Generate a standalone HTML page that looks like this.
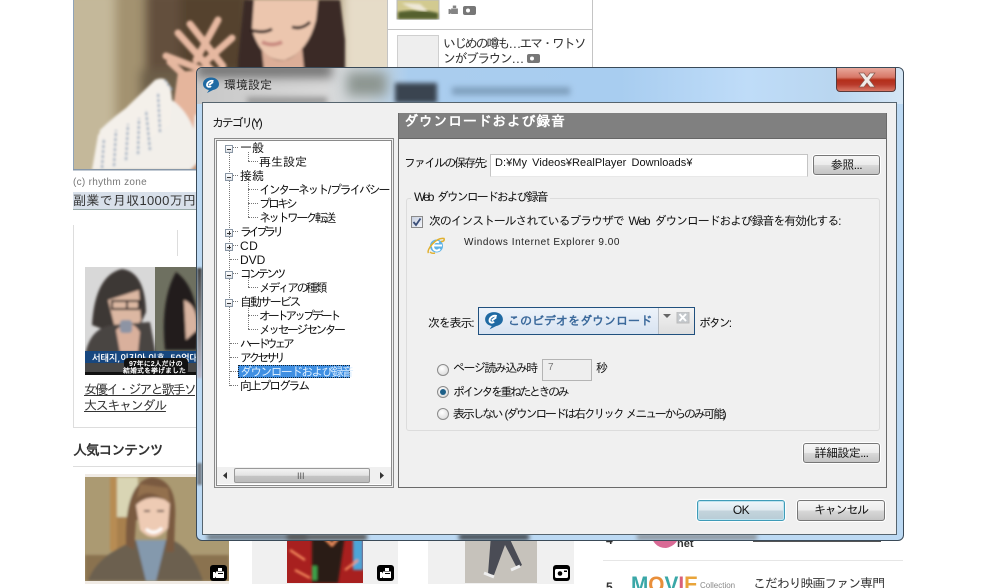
<!DOCTYPE html>
<html lang="ja"><head><meta charset="utf-8"><title>環境設定</title>
<style>
html,body{margin:0;padding:0;background:#fff}
#p{position:relative;width:1001px;height:588px;overflow:hidden;background:#fff;font-family:"Liberation Sans","IPAGothic","Noto Sans CJK JP",sans-serif;color:#222}
#p div,#p span.t{position:absolute}
.t{white-space:pre;line-height:14px;font-size:12px;letter-spacing:-1.4px;margin-top:1px}
.r{font-size:12px;color:#111}
.btn{box-sizing:border-box;border:1px solid #777;border-radius:3px;background:linear-gradient(#f6f6f6 0,#ececec 48%,#d8d8d8 52%,#c4c4c4 100%);box-shadow:0 0 0 1px #fff;text-align:center;font-size:12px;line-height:18px;color:#111;letter-spacing:-.6px}
.exp{width:8px;height:8px;border:1px solid #8a97a5;background:linear-gradient(#fff,#dfe3e8);box-sizing:border-box}
.exp:before{content:"";position:absolute;left:1px;right:1px;top:2.5px;height:1px;background:#333}
.pl:after{content:"";position:absolute;top:1px;bottom:1px;left:2.5px;width:1px;background:#333}
.dv{border-left:1px dotted #777;width:0}
.dh{border-top:1px dotted #777;height:0}
.rad{width:12px;height:12px;border-radius:50%;border:1px solid #8b8b8b;box-sizing:border-box;background:radial-gradient(circle at 40% 35%,#fff,#d4d4d4)}
</style></head><body><div id="p">

<svg style="position:absolute;left:0;top:0" width="1001" height="588" viewBox="0 0 1001 588">
<defs>
<filter id="b1"><feGaussianBlur stdDeviation="1.3"/></filter>
<filter id="b4"><feGaussianBlur stdDeviation="5"/></filter>
<clipPath id="c1"><rect x="73" y="0" width="314" height="170"/></clipPath>
<clipPath id="c2"><rect x="85" y="267" width="112" height="108"/></clipPath>
<clipPath id="c3"><rect x="85" y="477" width="144" height="104"/></clipPath>
<clipPath id="c4"><rect x="287" y="535" width="76" height="48"/></clipPath>
<clipPath id="c5"><rect x="465" y="535" width="72" height="48"/></clipPath>
<g id="vid"><path d="M3 7H5L6 8.500V6.500H14V13H6V11.500L5 13H3Z" fill="#fff"/><rect x="8" y="3" width="4" height="3" fill="#fff"/><rect x="8" y="8" width="5" height="1" fill="#000"/></g>
</defs>

<g clip-path="url(#c1)">
<rect x="73" y="0" width="314" height="170" fill="#a89878"/>
<g filter="url(#b4)">
<rect x="60" y="-10" width="55" height="190" fill="#c4b89a"/>
<rect x="115" y="-10" width="30" height="190" fill="#a39270"/>
<rect x="145" y="-10" width="35" height="100" fill="#64503e"/>
<rect x="140" y="70" width="50" height="40" fill="#6d5f48"/>
<rect x="180" y="-10" width="70" height="85" fill="#54432f"/>
<rect x="342" y="-10" width="60" height="190" fill="#e6dcc8"/>
</g>
<g filter="url(#b1)">
<path d="M244 0 L238 60 L236 110 L250 130 L345 120 L345 40 L340 0Z" fill="#3b2b27"/>
<path d="M254 0 L252 30 Q262 62 285 60 Q308 52 316 20 L318 0Z" fill="#ecc6ae"/>
<path d="M262 50 Q282 72 302 48 L306 90 L266 90Z" fill="#dcae98"/>
<path d="M250 30 Q264 34 272 29 M292 27 Q302 30 310 22" stroke="#2a1d1a" stroke-width="3" fill="none"/>
<path d="M262 42 Q272 47 282 42" stroke="#c98a80" stroke-width="4" fill="none"/>
<g stroke="#e6b8a0" stroke-width="7" stroke-linecap="round" fill="none">
<path d="M190 24 L223 66"/><path d="M178 33 L213 72"/><path d="M218 20 L196 60"/>
<path d="M166 56 L208 72"/><path d="M232 38 L205 62"/><path d="M170 62 L200 90"/>
</g>
<path d="M178 72 L220 68 L235 90 L215 140 L170 130Z" fill="#e5b59c"/>
<path d="M92 170 L100 130 Q130 100 170 85 L172 100 Q200 120 200 170Z" fill="#f2efea"/>
<path d="M155 80 Q172 72 172 105 L170 125 L110 165 L92 170 L98 135Z" fill="#f4f0ea"/>
<path d="M195 115 L250 100 L290 170 L190 170Z" fill="#f2eee8"/>
<path d="M205 155 Q240 135 270 150 L280 170 L190 170Z" fill="#c99c80"/>
<g stroke="#8da3bb" stroke-width="2.200" fill="none" stroke-dasharray="3 2">
<path d="M102 168 L104 138"/><path d="M114 166 L116 130"/><path d="M126 160 L128 124"/><path d="M138 154 L139 118"/><path d="M150 150 L146 110"/><path d="M160 132 L158 92"/><path d="M172 90 L165 80"/>
</g>
</g>
</g>
<rect x="73" y="0" width="1" height="170" fill="#8fa3b8"/>
<rect x="73" y="169" width="314" height="1.500" fill="#8797a8"/>

<rect x="397" y="0" width="42" height="19" fill="#d2ca90" stroke="#bbb"/>
<path d="M398 12 Q420 8 438 13 L438 19 L398 19Z" fill="#55602e" filter="url(#b1)"/>
<path d="M402 3 Q415 12 428 11 L420 4Z" fill="#eee8d8" filter="url(#b1)"/>
<rect x="397.500" y="35.500" width="41" height="33" fill="#eeeeee" stroke="#cfcfcf"/>

<g clip-path="url(#c2)">
<rect x="85" y="267" width="70" height="108" fill="#d8d8d8"/>
<rect x="155" y="267" width="45" height="108" fill="#6e7060"/>
<g filter="url(#b1)">
<path d="M176 272 Q202 290 197 350 L165 350Q160 300 176 272Z" fill="#241d1a"/>
<path d="M184 300 Q198 305 197 330 L186 340Z" fill="#d8b4a0"/>
<path d="M92 325 Q95 275 122 269 Q145 272 146 312 L138 330 L105 330Z" fill="#3e3734"/>
<path d="M108 300 L139 290 L141 320 Q130 342 116 332Z" fill="#dcb7a2"/>
<path d="M85 355 Q90 328 112 325 L150 322 L156 355Z" fill="#494442"/>
<path d="M116 330 Q130 316 140 332 L138 352 L120 352Z" fill="#d9b09c"/>
<rect x="120" y="320" width="12" height="13" fill="#8d94a4" rx="3"/>
<rect x="112" y="301" width="15" height="8" fill="none" stroke="#1d1d1d" stroke-width="2"/>
<rect x="127" y="301" width="12" height="8" fill="none" stroke="#1d1d1d" stroke-width="2"/>
</g>
<rect x="85" y="351" width="112" height="12" fill="#17477f"/>
<rect x="85" y="363" width="112" height="12" fill="#474747"/>
<rect x="85" y="372" width="112" height="3" fill="#111"/>
<text x="92" y="361" font-family="NanumGothic,sans-serif" font-size="9" font-weight="bold" fill="#fff">서태지,이지아 이혼, 50억대 소송</text>
<rect x="124" y="358" width="64" height="16" fill="#111" rx="4"/>
<text x="129" y="366" font-family="Liberation Sans,IPAGothic,sans-serif" font-size="7" font-weight="bold" fill="#fff">97年に2人だけの</text>
<text x="123" y="373" font-family="Liberation Sans,IPAGothic,sans-serif" font-size="7" font-weight="bold" fill="#fff">結婚式を挙げました</text>
</g>

<rect x="85" y="474" width="144" height="110" fill="#f0ebe5"/>
<g clip-path="url(#c3)">
<rect x="85" y="477" width="144" height="104" fill="#ab9a72"/>
<g filter="url(#b1)">
<rect x="85" y="555" width="144" height="26" fill="#8a7250"/>
<rect x="116" y="477" width="22" height="42" fill="#d9d5b4"/>
<rect x="110" y="477" width="7" height="74" fill="#b78c52"/>
<rect x="117" y="517" width="14" height="34" fill="#a8804e"/>
<path d="M88 581 Q96 556 136 540 L172 540 Q192 548 203 581Z" fill="#6c6050"/>
<path d="M136 540 L166 540 L156 581 L146 581Z" fill="#8499ad"/>
<path d="M126 545 Q124 482 152 477 Q178 480 175 520 L174 552 L166 552 L168 520 L136 520 L134 550Z" fill="#7a5a40"/>
<path d="M136 505 Q150 492 170 502 L168 528 Q154 545 140 530Z" fill="#eecbb4"/>
<path d="M137 498 Q150 486 170 504 L168 488 L140 484Z" fill="#93704e"/>
<path d="M146 529 Q154 536 162 528" stroke="#fff" stroke-width="3" fill="none"/>
<path d="M144 511H150M157 511H164" stroke="#322" stroke-width="1.500"/>
</g></g>

<rect x="252" y="540" width="146" height="44" fill="#f0f0f0"/>
<g clip-path="url(#c4)"><rect x="287" y="535" width="76" height="48" fill="#a8201f"/>
<g filter="url(#b1)"><path d="M312 535 L345 535 L338 583 L312 583Z" fill="#2c1a14"/><path d="M353 538 L363 538 L363 570 L353 570Z" fill="#4ea5d8"/>
<path d="M290 550 L305 560 M295 570 L310 578 M345 570 L358 560 M325 538 L332 545 L338 538" stroke="#ff9a66" stroke-width="2" fill="none"/><rect x="312" y="566" width="5" height="14" fill="#3ca04a"/></g></g>
<rect x="428" y="540" width="146" height="44" fill="#f0f0f0"/>
<g clip-path="url(#c5)"><rect x="465" y="535" width="72" height="48" fill="#c6c2bb"/>
<path d="M491 535 L488 574 L494 575 L505 545 L517 568 L522 565 L508 535Z" fill="#4a4c55"/>
<path d="M484 573 L494 577 M511 570 L520 566" stroke="#eee" stroke-width="3"/></g>

<g transform="translate(210,565)"><rect width="17" height="16" rx="3" fill="#000"/><use href="#vid"/></g>
<g transform="translate(377,565)"><rect width="17" height="16" rx="3" fill="#000"/><use href="#vid"/></g>
<g transform="translate(553,565)"><rect width="17" height="16" rx="3" fill="#000"/><rect x="2" y="4" width="13" height="9" rx="1.500" fill="#fff"/><circle cx="7" cy="8.500" r="2.300" fill="#000"/><rect x="11" y="5.500" width="3" height="1.500" fill="#000"/></g>
<g transform="translate(446,3)" opacity=".6"><g transform="scale(.85)"><rect width="17" height="16" rx="3" fill="#fff"/><path d="M3 7H5L6 8.500V6.500H14V13H6V11.500L5 13H3Z" fill="#333"/><rect x="8" y="3" width="4" height="3" fill="#333"/></g></g>
<g fill="#777"><rect x="463" y="6" width="13" height="9" rx="2"/><rect x="527" y="54" width="13" height="9" rx="2"/></g>
<g fill="#fff"><circle cx="468" cy="10.500" r="2"/><circle cx="532" cy="58.500" r="2"/></g>

<path d="M650 530 Q652 548 666 548 Q678 546 682 530Z" fill="#d96a95"/>
<text x="677" y="547" font-family="Liberation Sans" font-size="11" font-weight="bold" fill="#333">net</text>
<text x="631" y="592" font-family="Liberation Sans" font-size="22" font-weight="bold" textLength="67" lengthAdjust="spacingAndGlyphs"><tspan fill="#3aa7a7">M</tspan><tspan fill="#e98f3a">O</tspan><tspan fill="#3aa7a7">V</tspan><tspan fill="#d9607a">I</tspan><tspan fill="#e9a43a">E</tspan></text>
<text x="700" y="588" font-family="Liberation Sans" font-size="8" fill="#888">Collection</text>
</svg>

<span class="t" style="left:73px;top:175px;font-size:10px;color:#777;letter-spacing:.3px">(c) rhythm zone</span>
<div style="left:73px;top:192px;width:130px;height:17px;background:#d8e0ea;border-bottom:1px solid #9aa"></div>
<span class="t" style="left:73px;top:193px;font-size:13px;letter-spacing:.3px;color:#333">副業で月収1000万円</span>
<div style="left:73px;top:225px;width:1px;height:203px;background:#ddd"></div>
<div style="left:73px;top:427px;width:130px;height:1px;background:#ddd"></div>
<div style="left:177px;top:230px;width:1px;height:26px;background:#ddd"></div>
<span class="t" style="left:84px;top:382px;font-size:13px;letter-spacing:-1.9px;text-decoration:underline;color:#333">女優イ・ジアと歌手ソ</span>
<span class="t" style="left:84px;top:398px;font-size:13px;letter-spacing:-1.3px;text-decoration:underline;color:#333">大スキャンダル</span>
<span class="t" style="left:73px;top:442px;font-size:14px;font-weight:bold;letter-spacing:-1.2px;color:#333">人気コンテンツ</span>
<div style="left:73px;top:466px;width:130px;height:1px;background:#ddd"></div>

<div style="left:387px;top:0;width:1px;height:68px;background:#c4c4c4"></div>
<div style="left:592px;top:0;width:1px;height:68px;background:#c4c4c4"></div>
<div style="left:387px;top:29px;width:206px;height:1px;background:#c4c4c4"></div>
<span class="t" style="left:443px;top:36px;font-size:13px;letter-spacing:-2.1px;color:#333">いじめの噂も…エマ・ワトソ</span>
<span class="t" style="left:443px;top:51px;font-size:13px;letter-spacing:-1.6px;color:#333">ンがブラウン…</span>

<span class="t" style="left:606px;top:532px;font-size:12px;font-weight:bold;color:#333">4</span>
<div style="left:753px;top:541px;width:128px;height:1px;background:#555"></div>
<div style="left:603px;top:560px;width:300px;height:1px;background:#e6e6e6"></div>
<span class="t" style="left:606px;top:579px;font-size:12px;font-weight:bold;color:#333">5</span>
<span class="t" style="left:753px;top:576px;font-size:13px;letter-spacing:-1.1px;color:#333">こだわり映画ファン専門</span>

<!-- dialog frame -->
<div style="left:196px;top:67px;width:708px;height:474px;box-sizing:border-box;border:1px solid #3a4a58;border-radius:6px;overflow:hidden;background:#bcd9f3">
  <div style="left:0;top:0;right:0;height:36px;background:linear-gradient(90deg,#c8c8c8 0,#d8d8d8 18%,#cfd8de 24%,#aacdee 30%,#a8cdf0 60%,#bfdcf8 78%,#b9d6f0 90%,#d5e6f5 100%)"></div>
  <div style="left:0;top:-6px;width:135px;height:16px;background:#777;filter:blur(5px)"></div>
  <div style="left:50px;top:29px;width:80px;height:8px;background:#999;filter:blur(3px)"></div>
  <div style="left:150px;top:4px;width:40px;height:24px;background:#8c9590;filter:blur(6px)"></div>
  <div style="left:198px;top:15px;width:42px;height:20px;background:#3a4450;filter:blur(2.500px)"></div>
  <div style="left:255px;top:19px;width:118px;height:8px;background:#7f9fbd;filter:blur(3px)"></div>
  <div style="left:0;top:200px;width:5px;height:110px;background:linear-gradient(#444,#888 50%,#bbc);filter:blur(1px)"></div>
  <div style="left:0;top:395px;width:5px;height:22px;background:#77808a;filter:blur(1px)"></div>
  <div style="left:10px;bottom:0;width:100px;height:6px;background:#6e7a84;filter:blur(2px)"></div>
  <div style="left:90px;bottom:0;width:80px;height:6px;background:#555;filter:blur(2px)"></div>
  <div style="left:262px;bottom:0;width:70px;height:6px;background:#40474e;filter:blur(2px)"></div>
  <div style="left:440px;bottom:0;width:120px;height:6px;background:#8e979f;filter:blur(2px)"></div>
</div>
<svg style="position:absolute;left:202px;top:76px" width="18" height="18" viewBox="0 0 18 17"><path d="M9 1C4 1 1 4 1 7.500C1 11 4 13 7 13.500L5 16.500L11 13.500C15 12.500 17 10.500 17 7.500C17 4 14 1 9 1Z" fill="#1f6aa3"/><path d="M11.500 4.500C8 3.500 5 6 5 8.500C5 10.500 8 11 9 9.500M7 8.500L11 5.500" stroke="#fff" stroke-width="1.800" fill="none"/></svg>
<span class="t" style="left:224px;top:77px;font-size:12px;letter-spacing:0;color:#222">環境設定</span>
<div style="left:836px;top:68px;width:60px;height:24px;box-sizing:border-box;border:1px solid #5a3a3a;border-top:0;border-radius:0 0 4px 4px;background:linear-gradient(#e8a89c 0,#d87868 40%,#b42f1a 52%,#b8392a 72%,#d87866 100%)"></div>
<svg style="position:absolute;left:857px;top:71px" width="20" height="18" viewBox="0 0 20 18"><path d="M2 2H7L10 6L13 2H18L12.500 9L18 16H13L10 12L7 16H2L7.500 9Z" fill="#f0ebe8" stroke="#8a5a50" stroke-width=".7"/></svg>

<div style="left:202px;top:102px;width:695px;height:433px;box-sizing:border-box;border:1px solid #56646e;background:#f0f0f0"></div>
<span class="t r" style="left:212px;top:115px;letter-spacing:-2.2px">カテゴリ(Y)</span>

<div style="left:214px;top:138px;width:180px;height:350px;box-sizing:border-box;border:1px solid #8a8a8a;background:#f0f0f0"></div>
<div style="left:216px;top:140px;width:176px;height:346px;box-sizing:border-box;border:1px solid #8a8a8a;background:#fff"></div>

<div class="dv" style="left:229px;top:150px;height:236px"></div>
<div class="dv" style="left:248px;top:152px;height:9px"></div><div class="dh" style="left:248px;top:161px;width:10px"></div>
<div class="dv" style="left:248px;top:180px;height:37px"></div>
<div class="dh" style="left:248px;top:189px;width:10px"></div><div class="dh" style="left:248px;top:203px;width:10px"></div><div class="dh" style="left:248px;top:217px;width:10px"></div>
<div class="dv" style="left:248px;top:278px;height:9px"></div><div class="dh" style="left:248px;top:287px;width:10px"></div>
<div class="dv" style="left:248px;top:306px;height:23px"></div><div class="dh" style="left:248px;top:315px;width:10px"></div><div class="dh" style="left:248px;top:329px;width:10px"></div>
<div class="dh" style="left:230px;top:147px;width:8px"></div><div class="dh" style="left:230px;top:175px;width:8px"></div><div class="dh" style="left:230px;top:231px;width:8px"></div><div class="dh" style="left:230px;top:245px;width:8px"></div><div class="dh" style="left:230px;top:259px;width:8px"></div><div class="dh" style="left:230px;top:273px;width:8px"></div><div class="dh" style="left:230px;top:301px;width:8px"></div><div class="dh" style="left:230px;top:343px;width:8px"></div><div class="dh" style="left:230px;top:357px;width:8px"></div><div class="dh" style="left:230px;top:371px;width:8px"></div><div class="dh" style="left:230px;top:385px;width:8px"></div>

<div class="exp" style="left:225px;top:145px"></div>
<div class="exp" style="left:225px;top:173px"></div>
<div class="exp pl" style="left:225px;top:229px"></div>
<div class="exp pl" style="left:225px;top:243px"></div>
<div class="exp" style="left:225px;top:271px"></div>
<div class="exp" style="left:225px;top:299px"></div>

<span class="t r" style="left:240px;top:140px;letter-spacing:0">一般</span>
<span class="t r" style="left:259px;top:154px;letter-spacing:0">再生設定</span>
<span class="t r" style="left:240px;top:168px;letter-spacing:0">接続</span>
<span class="t r" style="left:259px;top:182px;letter-spacing:-2.3px">インターネット / プライバシー</span>
<span class="t r" style="left:259px;top:196px;letter-spacing:-3px">プロキシ</span>
<span class="t r" style="left:259px;top:210px;letter-spacing:-2.7px">ネットワーク転送</span>
<span class="t r" style="left:240px;top:224px;letter-spacing:-3.9px">ライブラリ</span>
<span class="t r" style="left:240px;top:238px;letter-spacing:.5px">CD</span>
<span class="t r" style="left:240px;top:252px;letter-spacing:0">DVD</span>
<span class="t r" style="left:240px;top:266px;letter-spacing:-3.3px">コンテンツ</span>
<span class="t r" style="left:259px;top:280px;letter-spacing:-2.6px">メディアの種類</span>
<span class="t r" style="left:240px;top:294px;letter-spacing:-2.1px">自動サービス</span>
<span class="t r" style="left:259px;top:308px;letter-spacing:-3.2px">オートアップデート</span>
<span class="t r" style="left:259px;top:322px;letter-spacing:-2.7px">メッセージ センター</span>
<span class="t r" style="left:240px;top:336px;letter-spacing:-3.4px">ハードウェア</span>
<span class="t r" style="left:240px;top:350px;letter-spacing:-3.5px">アクセサリ</span>
<div style="left:238px;top:365px;width:112px;height:13px;box-sizing:border-box;background:#3f8fe2;border:1px dotted #123"></div>
<span class="t r" style="left:240px;top:364px;letter-spacing:-1.8px;color:#d8ecff">ダウンロードおよび録音</span>
<span class="t r" style="left:240px;top:378px;letter-spacing:-2.3px">向上プログラム</span>

<div style="left:217px;top:467px;width:174px;height:17px;background:#f0f0f0"></div>
<div style="left:234px;top:468px;width:136px;height:15px;box-sizing:border-box;border:1px solid #999;border-radius:2px;background:linear-gradient(#f3f3f3,#e2e2e2 50%,#c4c4c4 55%,#bbb)"></div>
<span class="t" style="left:297px;top:468px;font-size:9px;color:#555;letter-spacing:0">III</span>
<svg style="position:absolute;left:220px;top:471px" width="166" height="9"><path d="M3 4.500L7 1V8Z" fill="#333"/><path d="M160 1L164 4.500L160 8Z" fill="#333"/></svg>

<div style="left:398px;top:113px;width:489px;height:375px;box-sizing:border-box;border:1px solid #6a6a6a;border-top:0;background:#f0f0f0"></div>
<div style="left:399px;top:113px;width:487px;height:26px;background:#808080;border-bottom:1px solid #666;box-sizing:border-box"></div>
<span class="t" style="left:404px;top:113px;font-size:14px;font-weight:bold;color:#fff;letter-spacing:.7px">ダウンロードおよび録音</span>

<span class="t r" style="left:404px;top:155px;letter-spacing:-1.95px">ファイルの保存先:</span>
<div style="left:490px;top:154px;width:318px;height:23px;box-sizing:border-box;background:#fff;border:1px solid #c4c4c4;border-bottom-color:#e8e8e8"></div>
<span class="t" style="left:495px;top:155px;font-size:11px;letter-spacing:.05px;word-spacing:2px;color:#111">D:¥My Videos¥RealPlayer Downloads¥</span>
<div class="btn" style="left:813px;top:155px;width:67px;height:20px">参照...</div>

<div style="left:406px;top:198px;width:474px;height:233px;box-sizing:border-box;border:1px solid #dcdcdc;border-radius:3px"></div>
<span class="t r" style="left:411px;top:189px;background:#f0f0f0;padding:0 3px;letter-spacing:-2px;word-spacing:3px">Web ダウンロードおよび録音</span>
<div style="left:411px;top:216px;width:12px;height:12px;box-sizing:border-box;border:1px solid #8a8a8a;background:linear-gradient(135deg,#c8d0e0,#f4f6fa)"></div>
<svg style="position:absolute;left:412px;top:217px" width="10" height="10"><path d="M1.500 5L4 8L8.500 1.500" stroke="#3a4e78" stroke-width="1.800" fill="none"/></svg>
<span class="t r" style="left:429px;top:213px;letter-spacing:-1.2px;word-spacing:3px">次のインストールされているブラウザで Web ダウンロードおよび録音を有効化する:</span>
<svg style="position:absolute;left:427px;top:236px" width="19" height="19" viewBox="0 0 19 19"><ellipse cx="9.500" cy="10" rx="6.500" ry="6.500" fill="#5fb3e6"/><path d="M4 9.500H15M13 13C10 16 6 14.500 6 10C6 6.500 9 5 12 6.500" stroke="#fff" stroke-width="2" fill="none"/><path d="M1.500 17C-1 14 9 1 17 2.500C18 5 15 6 14 5M3 16C5 18 8 17 8 17" stroke="#e0b030" stroke-width="1.500" fill="none"/></svg>
<span class="t" style="left:464px;top:235px;font-size:10px;letter-spacing:.55px;color:#222">Windows Internet Explorer 9.00</span>

<span class="t r" style="left:428px;top:315px;letter-spacing:-1.2px">次を表示:</span>
<div style="left:478px;top:307px;width:217px;height:28px;box-sizing:border-box;border:1px solid #20507e;background:linear-gradient(#edf3fa,#d8e3f1)"></div>
<div style="left:658px;top:308px;width:35px;height:26px;background:linear-gradient(#f4f4f4,#dedede);border-left:1px solid #b9bfc6"></div>
<svg style="position:absolute;left:484px;top:311px" width="20" height="19" viewBox="0 0 18 17"><path d="M9 1C4 1 1 4 1 7.500C1 11 4 13 7 13.500L5 16.500L11 13.500C15 12.500 17 10.500 17 7.500C17 4 14 1 9 1Z" fill="#1f6aa3"/><path d="M11.500 4.500C8 3.500 5 6 5 8.500C5 10.500 8 11 9 9.500M7 8.500L11 5.500" stroke="#fff" stroke-width="1.800" fill="none"/></svg>
<span class="t" style="left:508px;top:313px;font-size:12px;font-weight:bold;letter-spacing:0;color:#3c6a9c">このビデオをダウンロード</span>
<svg style="position:absolute;left:662px;top:312px" width="28" height="13"><path d="M1 2H9L5 6Z" fill="#666"/><rect x="15" y="0" width="12" height="11" fill="#c4c8cc" stroke="#bbb"/><path d="M17.500 2L24 9M24 2L17.500 9" stroke="#fff" stroke-width="2"/></svg>
<span class="t r" style="left:699px;top:315px;letter-spacing:-2.1px">ボタン:</span>

<div class="rad" style="left:437px;top:364px"></div>
<span class="t r" style="left:453px;top:360px;letter-spacing:-1.55px">ページ読み込み時</span>
<div style="left:542px;top:359px;width:50px;height:22px;box-sizing:border-box;border:1px solid #b4b4b4;background:#eeeeee"></div>
<span class="t" style="left:548px;top:360px;font-size:10px;letter-spacing:0;color:#777">7</span>
<span class="t r" style="left:596px;top:360px;letter-spacing:0">秒</span>
<div class="rad" style="left:437px;top:386px"></div>
<div style="left:440px;top:389px;width:6px;height:6px;border-radius:50%;background:#1d5f88"></div>
<span class="t r" style="left:453px;top:384px;letter-spacing:-2.5px">ポインタを重ねたときのみ</span>
<div class="rad" style="left:437px;top:408px"></div>
<span class="t r" style="left:453px;top:406px;letter-spacing:-2.3px;word-spacing:2px">表示しない (ダウンロードは右クリック メニューからのみ可能)</span>

<div class="btn" style="left:803px;top:443px;width:77px;height:20px">詳細設定...</div>
<div class="btn" style="left:697px;top:500px;width:88px;height:21px;border-color:#3f9cb8;box-shadow:0 0 0 1px #bfe4f0 inset,0 0 1px 1px #fff;line-height:18px;background:linear-gradient(#eef6fa,#dfeaf0 48%,#c4d4dc 52%,#b8ccd6)">OK</div>
<div class="btn" style="left:797px;top:500px;width:88px;height:21px;line-height:18px;letter-spacing:-1.2px">キャンセル</div>

</div></body></html>
